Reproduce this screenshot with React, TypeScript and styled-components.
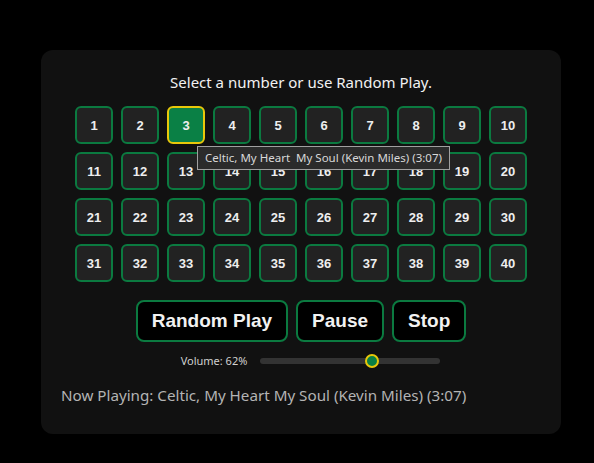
import React from 'react';
import styled, { createGlobalStyle } from 'styled-components';

const GlobalStyle = createGlobalStyle`
  html, body {
    margin: 0;
    padding: 0;
    background: #000;
  }
  body {
    font-family: 'Segoe UI', 'Noto Sans', 'Open Sans', sans-serif;
  }
`;

const Page = styled.div`
  width: 594px;
  height: 463px;
  padding-top: 50px;
  box-sizing: border-box;
  display: flex;
  justify-content: center;
  padding-left: 8px;
`;

const Panel = styled.div`
  position: relative;
  width: 520px;
  height: 384px;
  box-sizing: border-box;
  background: #111;
  border-radius: 12px;
  padding: 22px 20px 0 20px;
  display: flex;
  flex-direction: column;
  align-items: center;
`;

const Title = styled.div`
  color: #f2f2f2;
  font-size: 15px;
  line-height: 20px;
  margin-bottom: 14px;
`;

const Grid = styled.div`
  display: grid;
  grid-template-columns: repeat(10, 38px);
  gap: 8px;
`;

const NumButton = styled.button<{ $active?: boolean }>`
  width: 38px;
  height: 38px;
  box-sizing: border-box;
  border-radius: 6px;
  border: 2px solid ${(p) => (p.$active ? '#e8c80a' : '#0b7a40')};
  background: ${(p) => (p.$active ? '#0a8045' : '#222')};
  color: #eee;
  font-family: 'Liberation Sans', Arial, sans-serif;
  font-weight: bold;
  font-size: 13px;
  padding: 0;
  display: flex;
  align-items: center;
  justify-content: center;
`;

const Tooltip = styled.div`
  position: absolute;
  left: 156px;
  top: 96px;
  height: 24px;
  box-sizing: border-box;
  padding: 0 7px;
  background: #2b2b2b;
  border: 1px solid #a0a0a0;
  color: #d8d8d8;
  font-size: 11.5px;
  line-height: 22px;
  white-space: pre;
`;

const Controls = styled.div`
  display: flex;
  gap: 8px;
  margin-top: 18px;
`;

const ControlButton = styled.button`
  height: 42px;
  box-sizing: border-box;
  padding: 0 14px;
  border-radius: 8px;
  border: 2px solid #0b7a40;
  background: #000;
  color: #f2f2f2;
  font-family: 'Liberation Sans', Arial, sans-serif;
  font-weight: bold;
  font-size: 19px;
`;

const VolumeRow = styled.div`
  display: flex;
  align-items: center;
  gap: 13px;
  margin: 11px 0 0 19px;
  color: #d0d0d0;
  font-size: 11px;
`;

const Track = styled.div`
  position: relative;
  width: 180px;
  height: 6px;
  border-radius: 3px;
  background: #333;
`;

const Thumb = styled.div`
  position: absolute;
  top: 50%;
  width: 14px;
  height: 14px;
  box-sizing: border-box;
  border-radius: 50%;
  background: #0a8045;
  border: 2px solid #e8c80a;
  transform: translate(-50%, -50%);
`;

const NowPlaying = styled.div`
  align-self: flex-start;
  margin-top: 17px;
  color: #b4b4b4;
  font-size: 15.2px;
  line-height: 20px;
`;

const App = () => {
  const volume = 62;
  const numbers = Array.from({ length: 40 }, (_, i) => i + 1);

  return (
    <>
      <GlobalStyle />
      <Page>
        <Panel>
          <Title>Select a number or use Random Play.</Title>
          <Grid>
            {numbers.map((n) => (
              <NumButton key={n} $active={n === 3}>
                {n}
              </NumButton>
            ))}
          </Grid>
          <Tooltip>{'Celtic, My Heart  My Soul (Kevin Miles) (3:07)'}</Tooltip>
          <Controls>
            <ControlButton>Random Play</ControlButton>
            <ControlButton>Pause</ControlButton>
            <ControlButton>Stop</ControlButton>
          </Controls>
          <VolumeRow>
            <span>Volume: {volume}%</span>
            <Track>
              <Thumb style={{ left: `${volume}%` }} />
            </Track>
          </VolumeRow>
          <NowPlaying>Now Playing: Celtic, My Heart My Soul (Kevin Miles) (3:07)</NowPlaying>
        </Panel>
      </Page>
    </>
  );
};

export default App;
